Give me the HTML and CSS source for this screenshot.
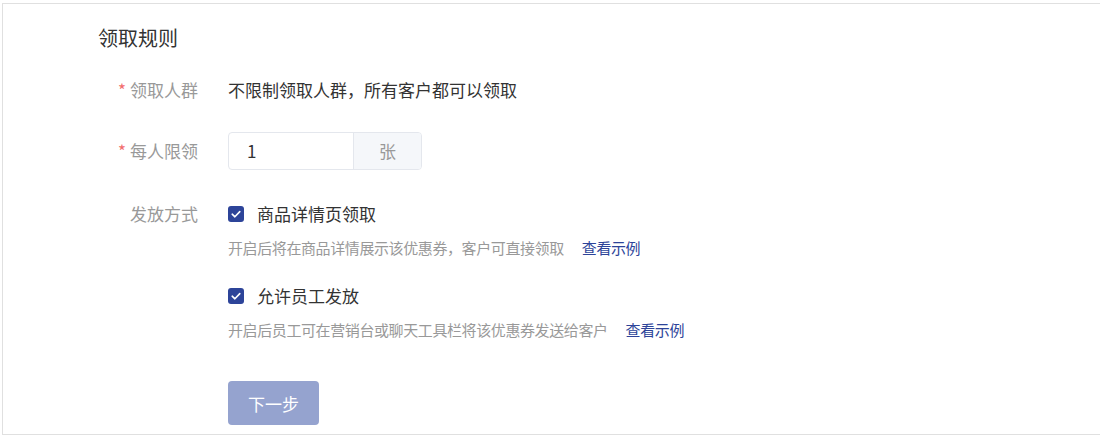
FILE: index.html
```html
<!DOCTYPE html>
<html lang="zh-CN">
<head>
<meta charset="utf-8">
<link rel="stylesheet" href="styles.css">
</head>
<body>
<div class="panel">
  <div class="title">领取规则</div>
  <div class="row row-audience">
    <div class="label"><span class="req">*</span>领取人群</div>
    <div class="content text">不限制领取人群，所有客户都可以领取</div>
  </div>
  <div class="row row-limit">
    <div class="label"><span class="req">*</span>每人限领</div>
    <div class="content">
      <div class="input-group">
        <div class="input">1</div>
        <div class="addon">张</div>
      </div>
    </div>
  </div>
  <div class="row row-method">
    <div class="label">发放方式</div>
    <div class="content">
      <div class="option">
        <div class="check-line">
          <span class="checkbox"><svg viewBox="0 0 16 16" width="16" height="16"><path d="M4.2 8.2 L6.9 10.8 L11.8 5.6" fill="none" stroke="#fff" stroke-width="1.6" stroke-linecap="round" stroke-linejoin="round"/></svg></span>
          <span class="check-text">商品详情页领取</span>
        </div>
        <div class="desc">开启后将在商品详情展示该优惠券，客户可直接领取<a class="link">查看示例</a></div>
      </div>
      <div class="option option-2">
        <div class="check-line">
          <span class="checkbox"><svg viewBox="0 0 16 16" width="16" height="16"><path d="M4.2 8.2 L6.9 10.8 L11.8 5.6" fill="none" stroke="#fff" stroke-width="1.6" stroke-linecap="round" stroke-linejoin="round"/></svg></span>
          <span class="check-text">允许员工发放</span>
        </div>
        <div class="desc">开启后员工可在营销台或聊天工具栏将该优惠券发送给客户<a class="link">查看示例</a></div>
      </div>
    </div>
  </div>
  <div class="actions">
    <button class="btn">下一步</button>
  </div>
</div>
</body>
</html>
```

FILE: styles.css
```css
html, body {
  margin: 0;
  padding: 0;
  background: #fff;
}
body {
  font-family: "Noto Sans CJK SC", "Noto Sans", sans-serif;
  color: #333;
}
.panel {
  margin: 3px 0 0 2px;
  height: 430px;
  border: 1px solid #e0e0e0;
  border-right: none;
  box-sizing: content-box;
}
.title {
  margin: 20px 0 0 95px;
  font-size: 20px;
  line-height: 28px;
  color: #333;
}
.row {
  display: flex;
  align-items: flex-start;
}
.label {
  width: 195px;
  flex: none;
  text-align: right;
  font-size: 17px;
  color: #999;
  line-height: 26px;
}
.req {
  color: #f26d6d;
  margin-right: 4px;
}
.content {
  margin-left: 30px;
}
.text {
  font-size: 17px;
  line-height: 26px;
  color: #333;
}
.row-audience {
  margin-top: 25px;
}
.row-limit {
  margin-top: 29px;
}
.row-limit .label {
  line-height: 38px;
}
.input-group {
  display: flex;
  width: 194px;
  height: 38px;
  border: 1px solid #e4e7ed;
  border-radius: 4px;
  box-sizing: border-box;
  overflow: hidden;
}
.input {
  flex: 1;
  padding-left: 18px;
  font-size: 17px;
  line-height: 36px;
  color: #333;
}
.addon {
  width: 67px;
  border-left: 1px solid #e4e7ed;
  background: #f5f7fa;
  text-align: center;
  font-size: 17px;
  line-height: 36px;
  color: #999;
}
.row-method {
  margin-top: 31px;
}
.check-line {
  display: flex;
  align-items: center;
  height: 26px;
}
.checkbox {
  width: 16px;
  height: 16px;
  border-radius: 3px;
  background: #2d4499;
  display: inline-flex;
  margin-right: 13px;
}
.check-text {
  font-size: 17px;
  line-height: 26px;
  color: #333;
}
.desc {
  margin-top: 10px;
  font-size: 15px;
  letter-spacing: -0.4px;
  line-height: 22px;
  color: #999;
}
.link {
  margin-left: 18px;
  color: #2d4499;
}
.option-2 {
  margin-top: 24px;
}
.actions {
  margin: 40px 0 0 225px;
}
.btn {
  display: block;
  width: 91px;
  height: 44px;
  border: none;
  border-radius: 4px;
  background: #95a3cf;
  color: #fff;
  font-family: "Noto Sans CJK SC", sans-serif;
  font-size: 17px;
  padding: 0;
}
```
